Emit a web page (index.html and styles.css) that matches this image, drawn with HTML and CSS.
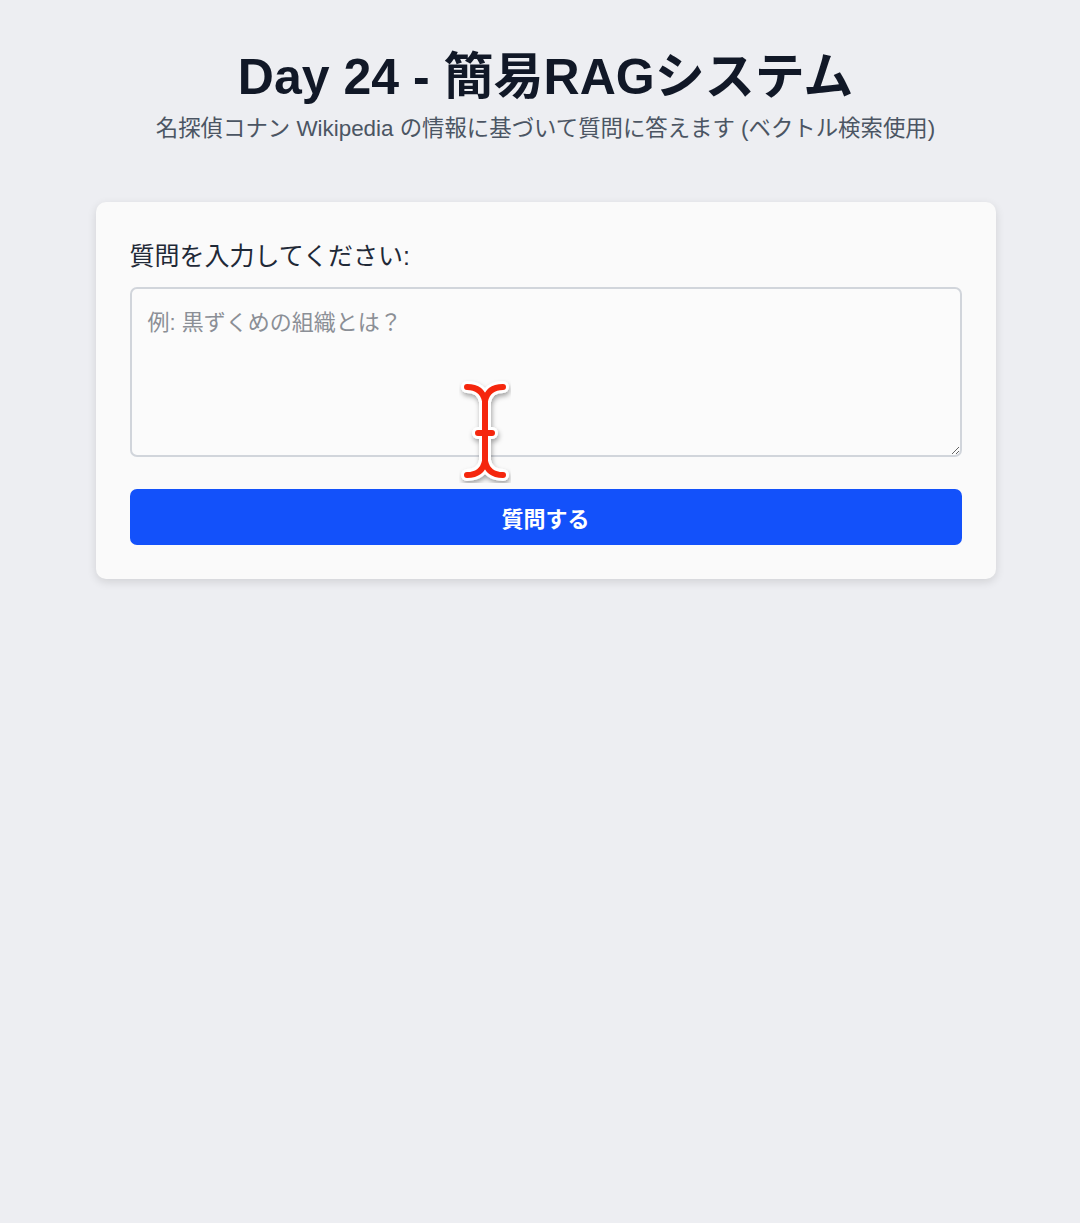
FILE: index.html
```html
<!DOCTYPE html>
<html lang="ja">
<head>
    <meta charset="UTF-8">
    <meta name="viewport" content="width=device-width, initial-scale=1.0">
    <title>Day 24 - 簡易RAGシステム</title>
    <link rel="stylesheet" href="styles.css">
</head>
<body>
    <div class="container">
        <header class="header">
            <h1>Day 24 - 簡易RAGシステム</h1>
            <p class="subtitle">名探偵コナン Wikipedia の情報に基づいて質問に答えます (ベクトル検索使用)</p>
        </header>

        <div class="card">
            <label class="label" for="question">質問を入力してください:</label>
            <div class="input-wrap">
                <textarea id="question" class="question-input" placeholder="例: 黒ずくめの組織とは？"></textarea>
                <!-- mouse cursor from the screenshot -->
                <svg class="cursor" width="52" height="104" viewBox="0 0 52 104">
                    <defs>
                        <filter id="shadow" x="-30%" y="-30%" width="160%" height="160%">
                            <feDropShadow dx="1" dy="3" stdDeviation="2.5" flood-color="#000" flood-opacity="0.35"/>
                        </filter>
                    </defs>
                    <g filter="url(#shadow)" fill="none" stroke-linecap="round" stroke-linejoin="round">
                        <path d="M8 8 C17 8 24 12 26 22 C28 12 35 8 44 8 M26 22 L26 82 C24 92 17 96 8 96 M26 82 C28 92 35 96 44 96 M19 54 L33 54" stroke="#fff" stroke-width="12"/>
                        <path d="M8 8 C17 8 24 12 26 22 C28 12 35 8 44 8 M26 22 L26 82 C24 92 17 96 8 96 M26 82 C28 92 35 96 44 96 M19 54 L33 54" stroke="#f5260a" stroke-width="6"/>
                    </g>
                </svg>
            </div>
            <button class="button" type="button">質問する</button>
        </div>
    </div>
</body>
</html>
```

FILE: styles.css
```css
* {
    margin: 0;
    padding: 0;
    box-sizing: border-box;
}

body {
    background: #edeef2;
    color: #111827;
    font-family: "Liberation Sans", Arial, "Noto Sans CJK JP", sans-serif;
    min-height: 100vh;
    padding-left: 11px;
}

.container {
    width: 900px;
    margin: 0 auto;
    padding-top: 43px;
}

.header {
    text-align: center;
    margin-bottom: 59px;
}

.header h1 {
    font-size: 50px;
    font-weight: bold;
    line-height: 68px;
    color: #111827;
}

.subtitle {
    margin-top: 4px;
    font-size: 22.4px;
    line-height: 28px;
    color: #4b5563;
}

.card {
    background: #fafafa;
    border-radius: 10px;
    box-shadow: 0 3px 10px rgba(0, 0, 0, 0.12);
    padding: 38px 34px 34px;
    display: flex;
    flex-direction: column;
}

.label {
    font-size: 25px;
    line-height: 32px;
    color: #1f2937;
    margin-bottom: 15px;
}

.input-wrap {
    position: relative;
}

.question-input {
    display: block;
    width: 100%;
    height: 170px;
    padding: 15px 16px;
    border: 2px solid #d1d5db;
    border-radius: 7px;
    background: #fbfbfb;
    font-family: inherit;
    font-size: 22px;
    color: #111827;
    resize: vertical;
}

.question-input::placeholder {
    color: #8b8f96;
}

.cursor {
    position: absolute;
    left: 329px;
    top: 92px;
    pointer-events: none;
}

.button {
    margin-top: 32px;
    height: 56px;
    border: none;
    border-radius: 7px;
    background: #1351fa;
    color: #ffffff;
    font-family: inherit;
    font-size: 22px;
    font-weight: bold;
    cursor: pointer;
}
```
